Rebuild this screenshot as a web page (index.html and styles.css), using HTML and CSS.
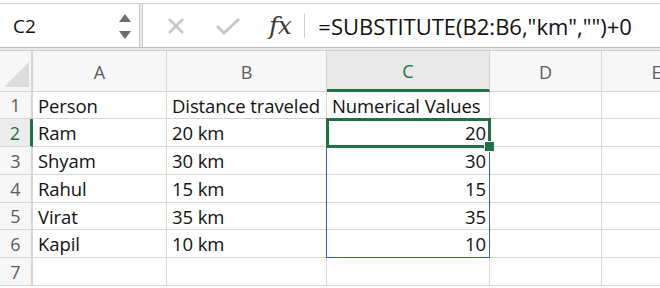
FILE: index.html
```html
<!DOCTYPE html>
<html lang="en">
<head>
  <meta charset="UTF-8" />
  <title>SUBSTITUTE example</title>
  <link rel="stylesheet" href="styles.css">
</head>
<body>
  <div class="toolbar">
    <div class="namebox">
      <span class="cellref">C2</span>
      <div class="spinner">
        <span class="tri-up"></span>
        <span class="tri-down"></span>
      </div>
    </div>
    <div class="formula-bar">
      <svg class="icon-x" width="18" height="18" viewBox="0 0 18 18">
        <path d="M2 2 L16 16 M16 2 L2 16" stroke="#c6c6c6" stroke-width="2.6" fill="none" />
      </svg>
      <svg class="icon-check" width="26" height="18" viewBox="0 0 26 18">
        <path d="M2 9 L9 16 L24 2" stroke="#c6c6c6" stroke-width="2.8" fill="none" />
      </svg>
      <span class="fx">fx</span>
      <span class="divider"></span>
      <span class="formula">=SUBSTITUTE(B2:B6,"km","")+0</span>
    </div>
  </div>

  <div class="sheet">
    <div class="grid">
      <div class="corner"><span class="corner-tri"></span></div>
      <div class="colhead">A</div>
      <div class="colhead">B</div>
      <div class="colhead active">C</div>
      <div class="colhead">D</div>
      <div class="colhead">E</div>

      <div class="rowhead">1</div>
      <div class="cell">Person</div>
      <div class="cell">Distance traveled</div>
      <div class="cell">Numerical Values</div>
      <div class="cell"></div>
      <div class="cell"></div>

      <div class="rowhead active">2</div>
      <div class="cell">Ram</div>
      <div class="cell">20 km</div>
      <div class="cell num">20</div>
      <div class="cell"></div>
      <div class="cell"></div>

      <div class="rowhead">3</div>
      <div class="cell">Shyam</div>
      <div class="cell">30 km</div>
      <div class="cell num">30</div>
      <div class="cell"></div>
      <div class="cell"></div>

      <div class="rowhead">4</div>
      <div class="cell">Rahul</div>
      <div class="cell">15 km</div>
      <div class="cell num">15</div>
      <div class="cell"></div>
      <div class="cell"></div>

      <div class="rowhead">5</div>
      <div class="cell">Virat</div>
      <div class="cell">35 km</div>
      <div class="cell num">35</div>
      <div class="cell"></div>
      <div class="cell"></div>

      <div class="rowhead">6</div>
      <div class="cell">Kapil</div>
      <div class="cell">10 km</div>
      <div class="cell num">10</div>
      <div class="cell"></div>
      <div class="cell"></div>

      <div class="rowhead">7</div>
      <div class="cell"></div>
      <div class="cell"></div>
      <div class="cell"></div>
      <div class="cell"></div>
      <div class="cell"></div>

      <div class="rowhead"></div>
      <div class="cell"></div>
      <div class="cell"></div>
      <div class="cell"></div>
      <div class="cell"></div>
      <div class="cell"></div>
    </div>

    <!-- spill range and active cell sit on top of the grid -->
    <div class="range"></div>
    <div class="selection"><span class="handle"></span></div>
  </div>
</body>
</html>
```

FILE: styles.css
```css
body {
  margin: 0;
  background: #fff;
  font-family: "Open Sans", "Noto Sans", sans-serif;
  color: #111;
  overflow: hidden;
}

.toolbar {
  display: flex;
  height: 43px;
  margin-top: 3px;
  border-top: 1px solid #cfcfcf;
  border-bottom: 1px solid #bdbdbd;
  box-shadow: 0 2px 0 #e9e9e9, 0 3px 0 #cdcdcd;
  background: #fff;
}

.namebox {
  width: 140px;
  display: flex;
  align-items: center;
  justify-content: space-between;
  padding: 0 8px 0 13px;
  box-sizing: border-box;
  border-right: 1px solid #c8c8c8;
  box-shadow: 2px 0 0 #ececec, 3px 0 0 #c8c8c8;
}

.cellref {
  font-size: 19px;
  color: #111;
}

.spinner {
  display: flex;
  flex-direction: column;
  gap: 9px;
  margin-top: 2px;
}

.tri-up,
.tri-down {
  width: 0;
  height: 0;
  border-left: 6px solid transparent;
  border-right: 6px solid transparent;
}

.tri-up {
  border-bottom: 8px solid #6e6e6e;
}

.tri-down {
  border-top: 8px solid #6e6e6e;
}

.formula-bar {
  flex: 1;
  display: flex;
  align-items: center;
  margin-left: 3px;
}

.icon-x {
  margin-left: 24px;
}

.icon-check {
  margin-left: 30px;
}

.fx {
  margin-left: 28px;
  font-family: "DejaVu Serif", "Liberation Serif", serif;
  font-style: italic;
  font-size: 25px;
  color: #3a3a3a;
  letter-spacing: -0.5px;
}

.divider {
  width: 1px;
  height: 24px;
  background: #d0d0d0;
  margin-left: 13px;
}

.formula {
  margin-left: 13px;
  font-size: 22px;
  color: #111;
  white-space: nowrap;
}

.sheet {
  position: relative;
  margin-top: 3px;
  width: 660px;
  height: 235px;
  overflow: hidden;
}

.grid {
  display: grid;
  grid-template-columns: 33px 134px 160px 163px 112px 110px;
  grid-template-rows: 41px 27px 28px 28px 28px 27px 28px 28px 4px;
}

.corner,
.colhead,
.rowhead,
.cell {
  box-sizing: border-box;
  border-right: 1px solid #d6d6d6;
  border-bottom: 1px solid #d6d6d6;
}

.corner {
  background: #f7f7f7;
  display: flex;
  align-items: flex-end;
  padding: 0 0 4px 4px;
  border-right-width: 2px;
}

.corner-tri {
  width: 0;
  height: 0;
  border-left: 25px solid transparent;
  border-bottom: 25px solid #dcdcdc;
}

.colhead {
  background: #f7f7f7;
  display: flex;
  align-items: center;
  justify-content: center;
  font-size: 18px;
  color: #5c5c5c;
  padding-top: 1px;
}

.colhead.active {
  background: #e9e9e9;
  color: #1f7145;
  border-bottom: 3px solid #1f7145;
}

.rowhead {
  background: #f7f7f7;
  display: flex;
  align-items: center;
  justify-content: center;
  font-size: 18px;
  color: #5c5c5c;
  border-right-width: 2px;
}

.rowhead.active {
  color: #1f7145;
  background: #ececec;
  border-right: 3px solid #1f7145;
}

.cell {
  display: flex;
  align-items: center;
  padding: 0 3px 0 5px;
  font-size: 18.5px;
  letter-spacing: -0.1px;
  white-space: nowrap;
  overflow: hidden;
}

.cell.num {
  justify-content: flex-end;
}

.range {
  position: absolute;
  left: 326px;
  top: 68px;
  width: 164px;
  height: 139px;
  border: 1px solid #2c5fc7;
  box-sizing: border-box;
}

.selection {
  position: absolute;
  left: 326px;
  top: 67px;
  width: 165px;
  height: 30px;
  border: 3px solid #1f7145;
  box-sizing: border-box;
}

.handle {
  position: absolute;
  right: -7px;
  bottom: -7px;
  width: 9px;
  height: 9px;
  background: #1f7145;
  border: 1px solid #fff;
}
```
